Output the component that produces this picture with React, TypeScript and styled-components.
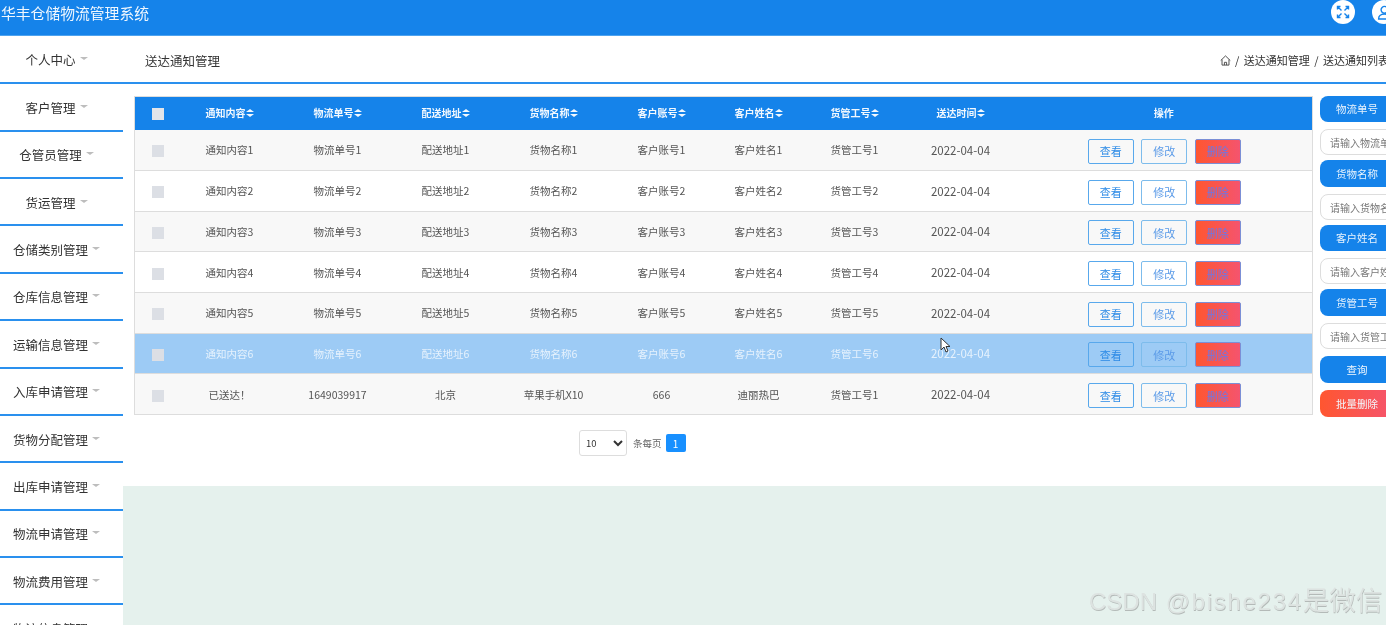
import React from "react";
import styled, { createGlobalStyle } from "styled-components";

const Global = createGlobalStyle`
  html, body { margin: 0; padding: 0; background: #fff; }
  body { font-family: "Noto Sans CJK SC", "Noto Sans", sans-serif; }
  * { box-sizing: border-box; }
`;
const BLUE = "#1583ea";
const Page = styled.div`
  position: relative; width: 1386px; height: 625px; overflow: hidden;
  background: #fff; filter: blur(0.4px);
`;
const TopBar = styled.header`
  height: 36px; background: ${BLUE}; border-bottom: 1px solid #4ea3ef;
  display: flex; justify-content: space-between; color: #fff; width: 1396px;
`;
const Title = styled.h1`
  margin: 0; padding: 2px 0 0 1px; font-size: 14.8px; line-height: 22px; font-weight: 400; color: #f0f7fe;
`;
const TopIcons = styled.div`display: flex; gap: 17px;`;
const RoundIcon = styled.span`
  width: 24px; height: 24px; border-radius: 50%; background: #fff;
  display: flex; align-items: center; justify-content: center; color: ${BLUE};
`;
const Body = styled.div`display: flex; width: 1394px; height: 589px; padding-top: 0.8px; background: #fff;`;
const Side = styled.nav`width: 123px; flex-shrink: 0; overflow: hidden;`;
const SideItem = styled.div`
  height: 47.4px; border-bottom: 2px solid #2a90ee;
  display: flex; align-items: center; justify-content: center; padding: 1px 10px 0 0;
  font-size: 12.5px; color: #333; gap: 3px; white-space: nowrap;
`;
const Caret = styled.i`
  width: 0; height: 0; border-left: 4px solid transparent; border-right: 4px solid transparent;
  border-top: 3px solid #bdbdbd; margin-top: -2px; margin-left: 1px;
`;
const Main = styled.main`flex: 1; min-width: 0; display: flex; flex-direction: column; background: #e5f1ed;`;
const SubHead = styled.div`
  height: 47.4px; flex-shrink: 0; background: #fff; border-bottom: 2px solid #2a90ee;
  display: flex; align-items: center; justify-content: space-between; padding: 2px 5px 0 22px; font-size: 12.5px; color: #333;
`;
const Crumbs = styled.div`display: flex; align-items: center; gap: 4.5px; font-size: 11px; color: #333;`;
const HomeIcon = styled.svg`margin-right: -1px;`;
const Panel = styled.div`height: 402px; flex-shrink: 0; background: #fff; padding: 12px 0 0 11px;`;
const Split = styled.div`display: flex; gap: 8px; align-items: flex-start;`;
const TableCol = styled.div`width: 1178px; flex-shrink: 0;`;
const Table = styled.table`
  width: 1178px; border-collapse: collapse; table-layout: fixed;
  border: 1px solid #ddd; font-size: 10.5px; color: #555;
`;
const Head = styled.th<{ $shift?: boolean }>`
  height: 33px; background: ${BLUE}; color: #f2f8fe; font-size: 10px; font-weight: 700; text-align: center;
  padding: 0 0 2px ${p => p.$shift ? "2px" : "0"};
`;
const Sort = styled.span`
  display: inline-block; width: 8px; height: 8px; vertical-align: -0.5px; position: relative;
  &::before, &::after {
    content: ""; position: absolute; left: 0; width: 0; height: 0;
    border-left: 4px solid transparent; border-right: 4px solid transparent;
  }
  &::before { top: 0; border-bottom: 3.5px solid #f2f8fe; }
  &::after { bottom: 0; border-top: 3.5px solid #f2f8fe; }
`;
const Row = styled.tr<{ $tone: "odd" | "even" | "hover" }>`
  height: 40.7px;
  background: ${p => p.$tone === "odd" ? "#f8f8f8" : p.$tone === "even" ? "#fff" : "#9dcbf5"};
  color: ${p => p.$tone === "hover" ? "#e6f2fd" : "#555"};
  border-bottom: 1px solid #ddd;
`;
const Cell = styled.td`padding: 0; text-align: center;`;
const DateCell = styled(Cell)`font-size: 11.5px;`;
const Check = styled.span<{ $head?: boolean }>`
  display: inline-block; width: 12px; height: 12px; vertical-align: middle; margin-left: 6px;
  background: ${p => p.$head ? "#e2e5ea" : "#dcdfe5"};
`;
const Actions = styled.div`display: flex; gap: 7.5px; justify-content: center; padding: 3px 0 0 3px;`;
const RowBtn = styled.button<{ $kind: "view" | "edit" | "del" }>`
  width: 46px; height: 25px; padding: 0; border-radius: 2px; font: inherit; font-size: 11px;
  color: ${p => p.$kind === "view" ? "#2b8ae6" : p.$kind === "edit" ? "#5b9be8" : "#6a78e8"};
  background: ${p => p.$kind === "del" ? "linear-gradient(90deg,#ff5630,#f5546e)" : "transparent"};
  border: 1px solid ${p => p.$kind === "del" ? "#7b8fd6" : p.$kind === "view" ? "#58a8ec" : "#7dbcec"};
`;
const Pager = styled.div`display: flex; align-items: center; margin: 15px 0 0 445px; font-size: 9.5px; color: #666;`;
const PageSelect = styled.select`
  width: 48px; height: 26px; font-size: 9.5px; border: 1px solid #ddd; border-radius: 3px; background: #fff;
  color: #333; padding-left: 2px; margin-right: 6px; font-family: inherit;
`;
const PageNo = styled.span`
  width: 20px; height: 18px; margin-left: 4px; background: #1890ff; color: #fff; border-radius: 2px;
  display: flex; align-items: center; justify-content: center; font-size: 10px;
`;
const Filters = styled.aside`width: 74px; flex-shrink: 0; margin-top: -0.6px; display: flex; flex-direction: column; gap: 5px;`;
const Pair = styled.div`display: flex; flex-direction: column; gap: 7px;`;
const FilterLabel = styled.div`
  height: 26.5px; background: ${BLUE}; color: #e8f3fd; border-radius: 8px; font-size: 10.5px;
  display: flex; align-items: center; justify-content: center;
`;
const FilterInput = styled.div`
  height: 26px; border: 1px solid #ddd; border-radius: 8px; background: #fff; padding-left: 9px;
  font-size: 10px; color: #777; line-height: 26px; overflow: hidden; white-space: nowrap;
`;
const FilterBtn = styled.div<{ $danger?: boolean }>`
  height: 26.5px; margin-top: 2.5px; border-radius: 8px; font-size: 10.5px; color: #f2f8fe;
  background: ${p => p.$danger ? "linear-gradient(90deg,#ff5630,#f5546e)" : BLUE};
  display: flex; align-items: center; justify-content: center;
`;
const Watermark = styled.div`
  position: absolute; left: 1089px; top: 586px; font-family: "Liberation Sans", "Noto Sans CJK SC", sans-serif;
  font-size: 24px; line-height: 30px; color: #dde3e1; text-shadow: 0.6px 0.6px 0.5px #b4bab8; white-space: nowrap;
`;
const WatermarkHandle = styled.span`letter-spacing: 1.7px; margin-left: 2px;`;
const WatermarkCjk = styled.span`font-size: 26.5px;`;
const Cursor = styled.svg`position: absolute; left: 940px; top: 337px;`;

const sideItems = ["个人中心","客户管理","仓管员管理","货运管理","仓储类别管理","仓库信息管理","运输信息管理","入库申请管理","货物分配管理","出库申请管理","物流申请管理","物流费用管理","物流信息管理"];
const heads = ["通知内容","物流单号","配送地址","货物名称","客户账号","客户姓名","货管工号","送达时间"];
const widths = [41,108,108,108,108,108,86,106,106,299];
const rows = [1,2,3,4,5,6].map(n => heads.slice(0,7).map(h => h + n));
rows.push(["已送达！","1649039917","北京","苹果手机X10","666","迪丽热巴","货管工号1"]);
const filters = [["物流单号","请输入物流单号"],["货物名称","请输入货物名称"],["客户姓名","请输入客户姓名"],["货管工号","请输入货管工号"]];

export default function App() {
  return (
    <Page>
      <Global />
      <TopBar>
        <Title>华丰仓储物流管理系统</Title>
        <TopIcons>
          <RoundIcon>
            <svg width="14" height="14" viewBox="0 0 14 14" fill="none" stroke="currentColor" strokeWidth="1.4">
              <path d="M1.500 4.500v-3h3M12.500 4.500v-3h-3M1.500 9.500v3h3M12.500 9.500v3h-3M2 2l3.500 3.500M12 2 8.500 5.500M2 12l3.500-3.500M12 12 8.500 8.500" />
            </svg>
          </RoundIcon>
          <RoundIcon>
            <svg width="15" height="15" viewBox="0 0 14 14" fill="none" stroke="currentColor" strokeWidth="1.3">
              <circle cx="7" cy="4.500" r="3.200" /><path d="M1.500 13c0-3 2.500-4.500 5.500-4.500s5.500 1.500 5.500 4.500z" />
            </svg>
          </RoundIcon>
        </TopIcons>
      </TopBar>
      <Body>
        <Side>
          {sideItems.map(s => <SideItem key={s}>{s}<Caret /></SideItem>)}
        </Side>
        <Main>
          <SubHead>
            <span>送达通知管理</span>
            <Crumbs>
              <HomeIcon width="11" height="11" viewBox="0 0 12 12" fill="none" stroke="#444" strokeWidth="1">
                <path d="M.8 6 6 1l5.200 5M2.200 5v6h7.600V5M4.800 11V8h2.400v3" />
              </HomeIcon>
              <span>/</span><span>送达通知管理</span><span>/</span><span>送达通知列表</span>
            </Crumbs>
          </SubHead>
          <Panel>
            <Split>
              <TableCol>
                <Table>
                  <colgroup>{widths.map((w, i) => <col key={i} style={{ width: w }} />)}</colgroup>
                  <thead>
                    <tr>
                      <Head><Check $head /></Head>
                      {heads.map(h => <Head key={h}>{h}<Sort /></Head>)}
                      <Head $shift>操作</Head>
                    </tr>
                  </thead>
                  <tbody>
                    {rows.map((r, i) => (
                      <Row key={i} $tone={i === 5 ? "hover" : i % 2 === 0 ? "odd" : "even"}>
                        <Cell><Check /></Cell>
                        {r.map((c, j) => <Cell key={j}>{c}</Cell>)}
                        <DateCell>2022-04-04</DateCell>
                        <Cell>
                          <Actions>
                            <RowBtn $kind="view">查看</RowBtn>
                            <RowBtn $kind="edit">修改</RowBtn>
                            <RowBtn $kind="del">删除</RowBtn>
                          </Actions>
                        </Cell>
                      </Row>
                    ))}
                  </tbody>
                </Table>
                <Pager>
                  <PageSelect defaultValue="10"><option>10</option></PageSelect>
                  <span>条每页</span>
                  <PageNo>1</PageNo>
                </Pager>
              </TableCol>
              <Filters>
                {filters.map(([l, p]) => (
                  <Pair key={l}>
                    <FilterLabel>{l}</FilterLabel>
                    <FilterInput>{p}</FilterInput>
                  </Pair>
                ))}
                <FilterBtn>查询</FilterBtn>
                <FilterBtn $danger>批量删除</FilterBtn>
              </Filters>
            </Split>
          </Panel>
        </Main>
      </Body>
      <Cursor width="11" height="16" viewBox="0 0 11 16">
        <path d="M1 1v12l3-3 2 5 2-1-2-4.500h4z" fill="#fff" stroke="#333" strokeWidth="1" />
      </Cursor>
      <Watermark>CSDN <WatermarkHandle>@bishe234</WatermarkHandle><WatermarkCjk>是微信</WatermarkCjk></Watermark>
    </Page>
  );
}
